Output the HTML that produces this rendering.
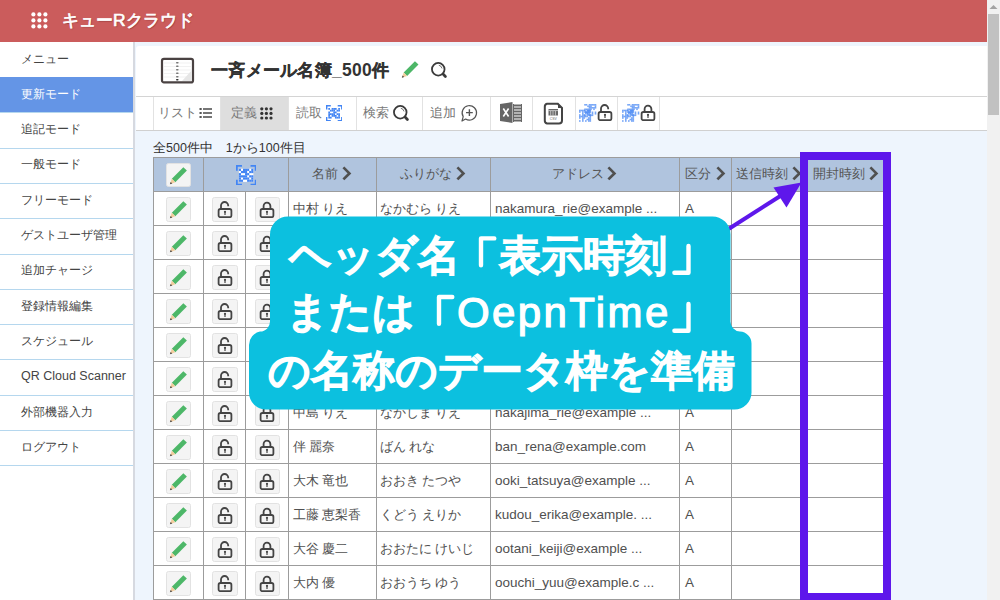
<!DOCTYPE html>
<html><head><meta charset="utf-8">
<style>
*{box-sizing:border-box;margin:0;padding:0}
html,body{width:1000px;height:600px;overflow:hidden;background:#eef5fd;font-family:"Liberation Sans",sans-serif;color:#333}
.a{position:absolute}
.nw{white-space:nowrap}
.si{position:absolute;left:0;width:133px;font-size:11.8px;padding-left:21px;color:#444;white-space:nowrap}
.sl{position:absolute;left:0;width:133px;height:1px;background:#b5d7ee}
.tt{position:absolute;font-size:12.5px;color:#777;white-space:nowrap}
.vl{position:absolute;width:1px;background:#9c9c9c}
.hl{position:absolute;height:1px;background:#9c9c9c}
.ct{position:absolute;font-size:12.5px;color:#505050;white-space:nowrap}
.btn{position:absolute;width:25px;height:25px;background:#f4f4f4;border:1px solid #e2e2e2;border-radius:2.5px}
.th{position:absolute;font-size:12.7px;color:#555;white-space:nowrap}
.co{position:absolute;color:#fff;font-weight:normal;white-space:nowrap;font-size:42px;-webkit-text-stroke:2.2px #fff}
</style></head><body>

<div class="a" style="left:0;top:0;width:987px;height:42px;background:#cb5c5c"></div>
<svg class="a" style="left:31px;top:12px" width="17" height="17" fill="#fff"><circle cx="2.4" cy="2.4" r="2.1"/><circle cx="2.4" cy="8.4" r="2.1"/><circle cx="2.4" cy="14.4" r="2.1"/><circle cx="8.4" cy="2.4" r="2.1"/><circle cx="8.4" cy="8.4" r="2.1"/><circle cx="8.4" cy="14.4" r="2.1"/><circle cx="14.4" cy="2.4" r="2.1"/><circle cx="14.4" cy="8.4" r="2.1"/><circle cx="14.4" cy="14.4" r="2.1"/></svg>
<div id="logo" class="a nw" style="left:62px;top:8px;font-size:17.4px;color:#fff;-webkit-text-stroke:0.7px #fff;text-shadow:1px 1px 1px rgba(60,0,0,0.35)">キューRクラウド</div>
<div class="a" style="left:987px;top:0;width:13px;height:600px;background:#f1f1f1"></div>
<div class="a" style="left:988px;top:14px;width:11px;height:101px;background:#c1c1c1"></div>
<svg class="a" style="left:989px;top:4px" width="9" height="6"><path d="M0.5 5 L4.5 1 L8.5 5Z" fill="#a3a3a3"/></svg>
<div class="a" style="left:0;top:42px;width:133px;height:558px;background:#fff"></div>
<div class="a" style="left:133px;top:42px;width:1.5px;height:558px;background:#d6d9e0"></div>
<div class="si" style="top:50.5px;color:#444;line-height:16px;">メニュー</div>
<div class="sl" style="top:77.0px"></div>
<div class="a" style="left:0;top:77px;width:133px;height:35.3px;background:#6495e6"></div>
<div class="si" style="top:85.8px;color:#fff;line-height:16px;">更新モード</div>
<div class="sl" style="top:112.3px"></div>
<div class="si" style="top:121.1px;color:#444;line-height:16px;">追記モード</div>
<div class="sl" style="top:147.6px"></div>
<div class="si" style="top:156.4px;color:#444;line-height:16px;">一般モード</div>
<div class="sl" style="top:182.9px"></div>
<div class="si" style="top:191.7px;color:#444;line-height:16px;">フリーモード</div>
<div class="sl" style="top:218.2px"></div>
<div class="si" style="top:227.0px;color:#444;line-height:16px;">ゲストユーザ管理</div>
<div class="sl" style="top:253.5px"></div>
<div class="si" style="top:262.3px;color:#444;line-height:16px;">追加チャージ</div>
<div class="sl" style="top:288.8px"></div>
<div class="si" style="top:297.6px;color:#444;line-height:16px;">登録情報編集</div>
<div class="sl" style="top:324.1px"></div>
<div class="si" style="top:332.9px;color:#444;line-height:16px;">スケジュール</div>
<div class="sl" style="top:359.4px"></div>
<div class="si" style="top:368.2px;color:#444;line-height:16px;font-size:12.5px;">QR Cloud Scanner</div>
<div class="sl" style="top:394.7px"></div>
<div class="si" style="top:403.5px;color:#444;line-height:16px;">外部機器入力</div>
<div class="sl" style="top:430.0px"></div>
<div class="si" style="top:438.8px;color:#444;line-height:16px;">ログアウト</div>
<div class="sl" style="top:465.3px"></div>
<div class="a" style="left:136px;top:46px;width:851px;height:84px;background:#fff;border-radius:3px 0 0 0"></div>
<svg class="a" style="left:160px;top:57px" width="36" height="28" viewBox="0 0 36 28">
<rect x="2" y="1.8" width="31" height="23.6" rx="2" fill="#fff" stroke="#4a4242" stroke-width="2.2"/>
<g stroke="#eee" stroke-width="0.8"><line x1="4" y1="6" x2="32" y2="6"/><line x1="4" y1="9.5" x2="32" y2="9.5"/><line x1="4" y1="13" x2="32" y2="13"/><line x1="4" y1="16.5" x2="32" y2="16.5"/><line x1="4" y1="20" x2="32" y2="20"/></g>
<path d="M32 13 L32 24 L22 24Z" fill="#e6e6e6"/>
<g fill="#777"><rect x="16" y="5" width="2.6" height="1.4" rx="0.7"/><rect x="16" y="8.5" width="2.6" height="1.4" rx="0.7"/><rect x="16" y="12" width="2.6" height="1.4" rx="0.7"/><rect x="16" y="15.5" width="2.6" height="1.4" rx="0.7"/><rect x="16" y="19" width="2.6" height="1.4" rx="0.7"/><rect x="16" y="22" width="2.6" height="1.6" rx="0.8" fill="#333"/></g>
</svg>
<div id="ttl" class="a nw" style="left:211px;top:60px;font-size:17.45px;letter-spacing:0.3px;font-weight:bold;color:#333;line-height:20px;-webkit-text-stroke:0.3px #333">一斉メール名簿<span style="-webkit-text-stroke:0">_500</span>件</div>
<svg class="a" style="left:398px;top:57.3px" width="24.5" height="24.5" viewBox="0 0 25 25">
<path d="M17.3 4.3 L20.9 7.6 L9.3 19.3 L5.8 15.8Z" fill="#4db768"/>
<path d="M5.8 15.8 L9.3 19.3 L3.9 21.3Z" fill="#f3cc9c"/>
<path d="M4.7 18.9 L6.3 20.5 L3.9 21.3Z" fill="#444"/>
</svg>
<svg class="a" style="left:430.8px;top:62.4px" width="18" height="18" viewBox="0 0 18 18">
<circle cx="7.25" cy="7.25" r="6.3" fill="none" stroke="#3a3a3a" stroke-width="1.8"/>
<path d="M7.8 3.2 A4.2 4.2 0 0 1 11.0 6.4" fill="none" stroke="#3a3a3a" stroke-width="0.9" stroke-opacity="0.8"/>
<path d="M12.3 12.3 L14.4 14.4" stroke="#3a3a3a" stroke-width="2.8" stroke-linecap="round"/>
</svg>
<div class="a" style="left:136px;top:96px;width:851px;height:1px;background:#d4d4d4"></div>
<div class="a" style="left:136px;top:129.5px;width:851px;height:1.5px;background:#d0d0d0"></div>
<div class="a" style="left:220px;top:97px;width:68px;height:32.5px;background:#dedede"></div>
<div class="a" style="left:152.5px;top:97px;width:1px;height:32.5px;background:#e2e2e2"></div>
<div class="a" style="left:220px;top:97px;width:1px;height:32.5px;background:#e2e2e2"></div>
<div class="a" style="left:288px;top:97px;width:1px;height:32.5px;background:#e2e2e2"></div>
<div class="a" style="left:355.5px;top:97px;width:1px;height:32.5px;background:#e2e2e2"></div>
<div class="a" style="left:422px;top:97px;width:1px;height:32.5px;background:#e2e2e2"></div>
<div class="a" style="left:490px;top:97px;width:1px;height:32.5px;background:#e2e2e2"></div>
<div class="a" style="left:532px;top:97px;width:1px;height:32.5px;background:#e2e2e2"></div>
<div class="a" style="left:574.5px;top:97px;width:1px;height:32.5px;background:#e2e2e2"></div>
<div class="a" style="left:616.5px;top:97px;width:1px;height:32.5px;background:#e2e2e2"></div>
<div class="a" style="left:659px;top:97px;width:1px;height:32.5px;background:#e2e2e2"></div>
<div class="tt" style="left:158px;top:106px;line-height:15px">リスト</div>
<div class="tt" style="left:231px;top:106px;line-height:15px">定義</div>
<div class="tt" style="left:296px;top:106px;line-height:15px">読取</div>
<div class="tt" style="left:363px;top:106px;line-height:15px">検索</div>
<div class="tt" style="left:430px;top:106px;line-height:15px">追加</div>
<svg class="a" style="left:199px;top:107px" width="14" height="12" viewBox="0 0 14 12" fill="#555">
<rect x="0.5" y="1" width="2.2" height="2"/><rect x="4" y="1.2" width="9" height="1.6"/>
<rect x="0.5" y="5" width="2.2" height="2"/><rect x="4" y="5.2" width="9" height="1.6"/>
<rect x="0.5" y="9" width="2.2" height="2"/><rect x="4" y="9.2" width="9" height="1.6"/>
</svg>
<svg class="a" style="left:260px;top:106.5px" width="13" height="13" fill="#333"><circle cx="1.8" cy="1.8" r="1.6"/><circle cx="1.8" cy="6.3999999999999995" r="1.6"/><circle cx="1.8" cy="11.0" r="1.6"/><circle cx="6.3999999999999995" cy="1.8" r="1.6"/><circle cx="6.3999999999999995" cy="6.3999999999999995" r="1.6"/><circle cx="6.3999999999999995" cy="11.0" r="1.6"/><circle cx="11.0" cy="1.8" r="1.6"/><circle cx="11.0" cy="6.3999999999999995" r="1.6"/><circle cx="11.0" cy="11.0" r="1.6"/></svg>
<svg class="a" style="left:325.8px;top:104.8px" width="16.5" height="16.5" viewBox="0 0 16.5 16.5">
<g fill="none" stroke="#4285f4" stroke-width="1.4"><path d="M0.7 4.6 V0.7 H4.8"/><path d="M11.7 0.7 H15.8 V4.6"/><path d="M0.7 11.9 V15.8 H4.8"/><path d="M11.7 15.8 H15.8 V11.9"/></g>
<rect x="2.3" y="3" width="11.7" height="10.6" fill="#fff"/><g fill="#4285f4"><rect x="2.30" y="3.00" width="1.7" height="1.8"/><rect x="5.62" y="3.00" width="1.7" height="1.8"/><rect x="7.28" y="3.00" width="1.7" height="1.8"/><rect x="8.94" y="3.00" width="1.7" height="1.8"/><rect x="12.26" y="3.00" width="1.7" height="1.8"/><rect x="3.96" y="4.75" width="1.7" height="1.8"/><rect x="5.62" y="4.75" width="1.7" height="1.8"/><rect x="7.28" y="4.75" width="1.7" height="1.8"/><rect x="10.60" y="4.75" width="1.7" height="1.8"/><rect x="12.26" y="4.75" width="1.7" height="1.8"/><rect x="2.30" y="6.50" width="1.7" height="1.8"/><rect x="7.28" y="6.50" width="1.7" height="1.8"/><rect x="8.94" y="6.50" width="1.7" height="1.8"/><rect x="2.30" y="8.25" width="1.7" height="1.8"/><rect x="3.96" y="8.25" width="1.7" height="1.8"/><rect x="5.62" y="8.25" width="1.7" height="1.8"/><rect x="7.28" y="8.25" width="1.7" height="1.8"/><rect x="10.60" y="8.25" width="1.7" height="1.8"/><rect x="12.26" y="8.25" width="1.7" height="1.8"/><rect x="2.30" y="10.00" width="1.7" height="1.8"/><rect x="5.62" y="10.00" width="1.7" height="1.8"/><rect x="7.28" y="10.00" width="1.7" height="1.8"/><rect x="8.94" y="10.00" width="1.7" height="1.8"/><rect x="12.26" y="10.00" width="1.7" height="1.8"/><rect x="2.30" y="11.75" width="1.7" height="1.8"/><rect x="3.96" y="11.75" width="1.7" height="1.8"/><rect x="8.94" y="11.75" width="1.7" height="1.8"/><rect x="10.60" y="11.75" width="1.7" height="1.8"/><rect x="12.26" y="11.75" width="1.7" height="1.8"/></g>
</svg>
<svg class="a" style="left:393px;top:104.6px" width="18" height="18" viewBox="0 0 18 18">
<circle cx="7.25" cy="7.25" r="6.3" fill="none" stroke="#3a3a3a" stroke-width="1.8"/>
<path d="M7.8 3.2 A4.2 4.2 0 0 1 11.0 6.4" fill="none" stroke="#3a3a3a" stroke-width="0.9" stroke-opacity="0.8"/>
<path d="M12.3 12.3 L14.4 14.4" stroke="#3a3a3a" stroke-width="2.8" stroke-linecap="round"/>
</svg>
<svg class="a" style="left:460px;top:104px" width="18" height="18" viewBox="0 0 18 18">
<path d="M3.2 12.6 A7.2 7.2 0 1 1 5.6 15 L2 17 Z" fill="none" stroke="#555" stroke-width="1.2" stroke-linejoin="round"/>
<path d="M9.4 5.2 V12 M6 8.6 H12.8" stroke="#555" stroke-width="1.4"/>
</svg>
<svg class="a" style="left:499px;top:101px" width="24" height="23" viewBox="0 0 24 23">
<path d="M1 3 L13.5 1 L13.5 22 L1 20Z" fill="#666"/>
<path d="M4.3 7.5 L9.6 15.5 M9.6 7.5 L4.3 15.5" stroke="#fff" stroke-width="1.6"/>
<g fill="#666"><rect x="14.5" y="3.5" width="8" height="2"/><rect x="14.5" y="6.5" width="8" height="2"/><rect x="14.5" y="9.5" width="8" height="2"/><rect x="14.5" y="12.5" width="8" height="2"/><rect x="14.5" y="15.5" width="8" height="2"/><rect x="14.5" y="18.5" width="8" height="2"/></g>
<g fill="#666"><rect x="14" y="3" width="1" height="18"/><rect x="22" y="3" width="1" height="18"/></g>
</svg>
<svg class="a" style="left:543px;top:101.5px" width="21" height="23" viewBox="0 0 21 23">
<path d="M4 1.8 H14.8 L19 6 V18.5 A3 3 0 0 1 16 21.5 H4 A3 3 0 0 1 1.8 18.5 V4.8 A3 3 0 0 1 4 1.8Z" fill="#fff" stroke="#444" stroke-width="2"/>
<path d="M15 1.5 L19.5 6 L15 6Z" fill="#444"/>
<rect x="5.5" y="7" width="9.5" height="6.5" fill="#666"/>
<g stroke="#fff" stroke-width="0.6"><line x1="5.5" y1="8.6" x2="15" y2="8.6"/><line x1="7.7" y1="9" x2="7.7" y2="13.5"/><line x1="10" y1="9" x2="10" y2="13.5"/><line x1="12.4" y1="9" x2="12.4" y2="13.5"/></g>
<text x="10.3" y="18" font-size="3.4" fill="#666" text-anchor="middle" font-family="Liberation Sans">CSV</text>
</svg>
<svg class="a" style="left:579px;top:104px" width="18" height="18" viewBox="0 0 18 18" fill="#4a8af4" fill-opacity="0.75"><rect x="5.20" y="0.00" width="1.6" height="1.6"/><rect x="6.70" y="0.00" width="1.6" height="1.6"/><rect x="9.70" y="0.00" width="1.6" height="1.6"/><rect x="11.20" y="0.00" width="1.6" height="1.6"/><rect x="12.70" y="0.00" width="1.6" height="1.6"/><rect x="14.20" y="0.00" width="1.6" height="1.6"/><rect x="15.70" y="0.00" width="1.6" height="1.6"/><rect x="8.20" y="1.50" width="1.6" height="1.6"/><rect x="9.70" y="1.50" width="1.6" height="1.6"/><rect x="11.20" y="1.50" width="1.6" height="1.6"/><rect x="15.70" y="1.50" width="1.6" height="1.6"/><rect x="9.70" y="3.00" width="1.6" height="1.6"/><rect x="11.20" y="3.00" width="1.6" height="1.6"/><rect x="12.70" y="3.00" width="1.6" height="1.6"/><rect x="14.20" y="3.00" width="1.6" height="1.6"/><rect x="15.70" y="3.00" width="1.6" height="1.6"/><rect x="5.20" y="4.50" width="1.6" height="1.6"/><rect x="6.70" y="4.50" width="1.6" height="1.6"/><rect x="8.20" y="4.50" width="1.6" height="1.6"/><rect x="9.70" y="4.50" width="1.6" height="1.6"/><rect x="11.20" y="4.50" width="1.6" height="1.6"/><rect x="14.20" y="4.50" width="1.6" height="1.6"/><rect x="5.20" y="6.00" width="1.6" height="1.6"/><rect x="8.20" y="6.00" width="1.6" height="1.6"/><rect x="9.70" y="6.00" width="1.6" height="1.6"/><rect x="5.20" y="7.50" width="1.6" height="1.6"/><rect x="6.70" y="7.50" width="1.6" height="1.6"/><rect x="8.20" y="7.50" width="1.6" height="1.6"/><rect x="9.70" y="7.50" width="1.6" height="1.6"/><rect x="12.70" y="7.50" width="1.6" height="1.6"/><rect x="15.70" y="7.50" width="1.6" height="1.6"/><rect x="8.20" y="9.00" width="1.6" height="1.6"/><rect x="9.70" y="9.00" width="1.6" height="1.6"/><rect x="12.70" y="9.00" width="1.6" height="1.6"/><rect x="15.70" y="9.00" width="1.6" height="1.6"/><rect x="5.20" y="10.50" width="1.6" height="1.6"/><rect x="9.70" y="10.50" width="1.6" height="1.6"/><rect x="11.20" y="10.50" width="1.6" height="1.6"/><rect x="12.70" y="10.50" width="1.6" height="1.6"/><rect x="0.00" y="5.70" width="1.6" height="1.6"/><rect x="1.50" y="5.70" width="1.6" height="1.6"/><rect x="3.00" y="5.70" width="1.6" height="1.6"/><rect x="4.50" y="5.70" width="1.6" height="1.6"/><rect x="7.50" y="5.70" width="1.6" height="1.6"/><rect x="9.00" y="5.70" width="1.6" height="1.6"/><rect x="10.50" y="5.70" width="1.6" height="1.6"/><rect x="0.00" y="7.20" width="1.6" height="1.6"/><rect x="3.00" y="7.20" width="1.6" height="1.6"/><rect x="6.00" y="7.20" width="1.6" height="1.6"/><rect x="7.50" y="7.20" width="1.6" height="1.6"/><rect x="9.00" y="7.20" width="1.6" height="1.6"/><rect x="10.50" y="7.20" width="1.6" height="1.6"/><rect x="3.00" y="8.70" width="1.6" height="1.6"/><rect x="6.00" y="8.70" width="1.6" height="1.6"/><rect x="7.50" y="8.70" width="1.6" height="1.6"/><rect x="0.00" y="10.20" width="1.6" height="1.6"/><rect x="3.00" y="10.20" width="1.6" height="1.6"/><rect x="4.50" y="10.20" width="1.6" height="1.6"/><rect x="7.50" y="10.20" width="1.6" height="1.6"/><rect x="9.00" y="10.20" width="1.6" height="1.6"/><rect x="10.50" y="10.20" width="1.6" height="1.6"/><rect x="0.00" y="11.70" width="1.6" height="1.6"/><rect x="1.50" y="11.70" width="1.6" height="1.6"/><rect x="3.00" y="11.70" width="1.6" height="1.6"/><rect x="4.50" y="11.70" width="1.6" height="1.6"/><rect x="6.00" y="11.70" width="1.6" height="1.6"/><rect x="7.50" y="11.70" width="1.6" height="1.6"/><rect x="10.50" y="11.70" width="1.6" height="1.6"/><rect x="0.00" y="13.20" width="1.6" height="1.6"/><rect x="3.00" y="13.20" width="1.6" height="1.6"/><rect x="4.50" y="13.20" width="1.6" height="1.6"/><rect x="9.00" y="13.20" width="1.6" height="1.6"/><rect x="10.50" y="13.20" width="1.6" height="1.6"/><rect x="3.00" y="14.70" width="1.6" height="1.6"/><rect x="7.50" y="14.70" width="1.6" height="1.6"/><rect x="9.00" y="14.70" width="1.6" height="1.6"/><rect x="10.50" y="14.70" width="1.6" height="1.6"/><rect x="0.00" y="16.20" width="1.6" height="1.6"/><rect x="3.00" y="16.20" width="1.6" height="1.6"/><rect x="6.00" y="16.20" width="1.6" height="1.6"/><rect x="9.00" y="16.20" width="1.6" height="1.6"/><rect x="10.50" y="16.20" width="1.6" height="1.6"/></svg>
<svg class="a" style="left:596.5px;top:102.6px" width="16.0" height="18.0" viewBox="0 0 16 18">
<path d="M4 9 V5.6 A3.6 3.6 0 0 1 11.2 5.6 V6.2" fill="none" stroke="#444" stroke-width="1.8"/><rect x="1.6" y="9" width="12.8" height="8.2" rx="1.8" fill="#fff" fill-opacity="0" stroke="#444" stroke-width="1.8"/>
<circle cx="8" cy="11.8" r="1.1" fill="#444"/><rect x="7.4" y="12" width="1.2" height="3" fill="#444"/>
</svg>
<svg class="a" style="left:622px;top:104px" width="18" height="18" viewBox="0 0 18 18" fill="#4a8af4" fill-opacity="0.75"><rect x="5.20" y="0.00" width="1.6" height="1.6"/><rect x="6.70" y="0.00" width="1.6" height="1.6"/><rect x="9.70" y="0.00" width="1.6" height="1.6"/><rect x="11.20" y="0.00" width="1.6" height="1.6"/><rect x="12.70" y="0.00" width="1.6" height="1.6"/><rect x="14.20" y="0.00" width="1.6" height="1.6"/><rect x="15.70" y="0.00" width="1.6" height="1.6"/><rect x="8.20" y="1.50" width="1.6" height="1.6"/><rect x="9.70" y="1.50" width="1.6" height="1.6"/><rect x="11.20" y="1.50" width="1.6" height="1.6"/><rect x="15.70" y="1.50" width="1.6" height="1.6"/><rect x="9.70" y="3.00" width="1.6" height="1.6"/><rect x="11.20" y="3.00" width="1.6" height="1.6"/><rect x="12.70" y="3.00" width="1.6" height="1.6"/><rect x="14.20" y="3.00" width="1.6" height="1.6"/><rect x="15.70" y="3.00" width="1.6" height="1.6"/><rect x="5.20" y="4.50" width="1.6" height="1.6"/><rect x="6.70" y="4.50" width="1.6" height="1.6"/><rect x="8.20" y="4.50" width="1.6" height="1.6"/><rect x="9.70" y="4.50" width="1.6" height="1.6"/><rect x="11.20" y="4.50" width="1.6" height="1.6"/><rect x="14.20" y="4.50" width="1.6" height="1.6"/><rect x="5.20" y="6.00" width="1.6" height="1.6"/><rect x="8.20" y="6.00" width="1.6" height="1.6"/><rect x="9.70" y="6.00" width="1.6" height="1.6"/><rect x="5.20" y="7.50" width="1.6" height="1.6"/><rect x="6.70" y="7.50" width="1.6" height="1.6"/><rect x="8.20" y="7.50" width="1.6" height="1.6"/><rect x="9.70" y="7.50" width="1.6" height="1.6"/><rect x="12.70" y="7.50" width="1.6" height="1.6"/><rect x="15.70" y="7.50" width="1.6" height="1.6"/><rect x="8.20" y="9.00" width="1.6" height="1.6"/><rect x="9.70" y="9.00" width="1.6" height="1.6"/><rect x="12.70" y="9.00" width="1.6" height="1.6"/><rect x="15.70" y="9.00" width="1.6" height="1.6"/><rect x="5.20" y="10.50" width="1.6" height="1.6"/><rect x="9.70" y="10.50" width="1.6" height="1.6"/><rect x="11.20" y="10.50" width="1.6" height="1.6"/><rect x="12.70" y="10.50" width="1.6" height="1.6"/><rect x="0.00" y="5.70" width="1.6" height="1.6"/><rect x="1.50" y="5.70" width="1.6" height="1.6"/><rect x="3.00" y="5.70" width="1.6" height="1.6"/><rect x="4.50" y="5.70" width="1.6" height="1.6"/><rect x="7.50" y="5.70" width="1.6" height="1.6"/><rect x="9.00" y="5.70" width="1.6" height="1.6"/><rect x="10.50" y="5.70" width="1.6" height="1.6"/><rect x="0.00" y="7.20" width="1.6" height="1.6"/><rect x="3.00" y="7.20" width="1.6" height="1.6"/><rect x="6.00" y="7.20" width="1.6" height="1.6"/><rect x="7.50" y="7.20" width="1.6" height="1.6"/><rect x="9.00" y="7.20" width="1.6" height="1.6"/><rect x="10.50" y="7.20" width="1.6" height="1.6"/><rect x="3.00" y="8.70" width="1.6" height="1.6"/><rect x="6.00" y="8.70" width="1.6" height="1.6"/><rect x="7.50" y="8.70" width="1.6" height="1.6"/><rect x="0.00" y="10.20" width="1.6" height="1.6"/><rect x="3.00" y="10.20" width="1.6" height="1.6"/><rect x="4.50" y="10.20" width="1.6" height="1.6"/><rect x="7.50" y="10.20" width="1.6" height="1.6"/><rect x="9.00" y="10.20" width="1.6" height="1.6"/><rect x="10.50" y="10.20" width="1.6" height="1.6"/><rect x="0.00" y="11.70" width="1.6" height="1.6"/><rect x="1.50" y="11.70" width="1.6" height="1.6"/><rect x="3.00" y="11.70" width="1.6" height="1.6"/><rect x="4.50" y="11.70" width="1.6" height="1.6"/><rect x="6.00" y="11.70" width="1.6" height="1.6"/><rect x="7.50" y="11.70" width="1.6" height="1.6"/><rect x="10.50" y="11.70" width="1.6" height="1.6"/><rect x="0.00" y="13.20" width="1.6" height="1.6"/><rect x="3.00" y="13.20" width="1.6" height="1.6"/><rect x="4.50" y="13.20" width="1.6" height="1.6"/><rect x="9.00" y="13.20" width="1.6" height="1.6"/><rect x="10.50" y="13.20" width="1.6" height="1.6"/><rect x="3.00" y="14.70" width="1.6" height="1.6"/><rect x="7.50" y="14.70" width="1.6" height="1.6"/><rect x="9.00" y="14.70" width="1.6" height="1.6"/><rect x="10.50" y="14.70" width="1.6" height="1.6"/><rect x="0.00" y="16.20" width="1.6" height="1.6"/><rect x="3.00" y="16.20" width="1.6" height="1.6"/><rect x="6.00" y="16.20" width="1.6" height="1.6"/><rect x="9.00" y="16.20" width="1.6" height="1.6"/><rect x="10.50" y="16.20" width="1.6" height="1.6"/></svg>
<svg class="a" style="left:639.5px;top:102.6px" width="16.0" height="18.0" viewBox="0 0 16 18">
<path d="M4.6 9 V6 A3.4 3.4 0 0 1 11.4 6 V9" fill="none" stroke="#444" stroke-width="1.8"/><rect x="1.6" y="9" width="12.8" height="8.2" rx="1.8" fill="#fff" fill-opacity="0" stroke="#444" stroke-width="1.8"/>
<circle cx="8" cy="11.8" r="1.1" fill="#444"/><rect x="7.4" y="12" width="1.2" height="3" fill="#444"/>
</svg>
<div id="cnt" class="a nw" style="left:153px;top:141px;font-size:12.5px;color:#333;line-height:15px">全500件中　1から100件目</div>
<div class="a" style="left:153px;top:157.5px;width:731px;height:34px;background:#b0c4de"></div>
<div class="a" style="left:153px;top:191.5px;width:731px;height:408.5px;background:#fff"></div>
<div class="vl" style="left:152.5px;top:157.5px;height:442.5px"></div>
<div class="vl" style="left:203.0px;top:157.5px;height:442.5px"></div>
<div class="vl" style="left:245.1px;top:191.5px;height:408.5px"></div>
<div class="vl" style="left:288.0px;top:157.5px;height:442.5px"></div>
<div class="vl" style="left:376.2px;top:157.5px;height:442.5px"></div>
<div class="vl" style="left:489.5px;top:157.5px;height:442.5px"></div>
<div class="vl" style="left:678.9px;top:157.5px;height:442.5px"></div>
<div class="vl" style="left:730.8px;top:157.5px;height:442.5px"></div>
<div class="vl" style="left:804.5px;top:157.5px;height:442.5px"></div>
<div class="vl" style="left:883.5px;top:157.5px;height:442.5px"></div>
<div class="hl" style="left:153px;top:157.0px;width:731px"></div>
<div class="hl" style="left:153px;top:191.0px;width:731px"></div>
<div class="hl" style="left:153px;top:225.0px;width:731px"></div>
<div class="hl" style="left:153px;top:259.0px;width:731px"></div>
<div class="hl" style="left:153px;top:293.0px;width:731px"></div>
<div class="hl" style="left:153px;top:327.0px;width:731px"></div>
<div class="hl" style="left:153px;top:361.0px;width:731px"></div>
<div class="hl" style="left:153px;top:395.0px;width:731px"></div>
<div class="hl" style="left:153px;top:429.0px;width:731px"></div>
<div class="hl" style="left:153px;top:463.0px;width:731px"></div>
<div class="hl" style="left:153px;top:497.0px;width:731px"></div>
<div class="hl" style="left:153px;top:531.0px;width:731px"></div>
<div class="hl" style="left:153px;top:565.0px;width:731px"></div>
<div class="hl" style="left:153px;top:599.0px;width:731px"></div>
<div class="btn" style="left:166px;top:162.5px;width:24.5px;height:24.5px"></div>
<svg class="a" style="left:166px;top:162.5px" width="25.0" height="25.0" viewBox="0 0 25 25">
<path d="M17.3 4.3 L20.9 7.6 L9.3 19.3 L5.8 15.8Z" fill="#4db768"/>
<path d="M5.8 15.8 L9.3 19.3 L3.9 21.3Z" fill="#f3cc9c"/>
<path d="M4.7 18.9 L6.3 20.5 L3.9 21.3Z" fill="#444"/>
</svg>
<svg class="a" style="left:235.5px;top:164.75px" width="20.5" height="20.5" viewBox="0 0 16.5 16.5">
<g fill="none" stroke="#4285f4" stroke-width="1.4"><path d="M0.7 4.6 V0.7 H4.8"/><path d="M11.7 0.7 H15.8 V4.6"/><path d="M0.7 11.9 V15.8 H4.8"/><path d="M11.7 15.8 H15.8 V11.9"/></g>
<rect x="2.3" y="3" width="11.7" height="10.6" fill="#fff"/><g fill="#4285f4"><rect x="2.30" y="3.00" width="1.7" height="1.8"/><rect x="5.62" y="3.00" width="1.7" height="1.8"/><rect x="7.28" y="3.00" width="1.7" height="1.8"/><rect x="8.94" y="3.00" width="1.7" height="1.8"/><rect x="12.26" y="3.00" width="1.7" height="1.8"/><rect x="3.96" y="4.75" width="1.7" height="1.8"/><rect x="5.62" y="4.75" width="1.7" height="1.8"/><rect x="7.28" y="4.75" width="1.7" height="1.8"/><rect x="10.60" y="4.75" width="1.7" height="1.8"/><rect x="12.26" y="4.75" width="1.7" height="1.8"/><rect x="2.30" y="6.50" width="1.7" height="1.8"/><rect x="7.28" y="6.50" width="1.7" height="1.8"/><rect x="8.94" y="6.50" width="1.7" height="1.8"/><rect x="2.30" y="8.25" width="1.7" height="1.8"/><rect x="3.96" y="8.25" width="1.7" height="1.8"/><rect x="5.62" y="8.25" width="1.7" height="1.8"/><rect x="7.28" y="8.25" width="1.7" height="1.8"/><rect x="10.60" y="8.25" width="1.7" height="1.8"/><rect x="12.26" y="8.25" width="1.7" height="1.8"/><rect x="2.30" y="10.00" width="1.7" height="1.8"/><rect x="5.62" y="10.00" width="1.7" height="1.8"/><rect x="7.28" y="10.00" width="1.7" height="1.8"/><rect x="8.94" y="10.00" width="1.7" height="1.8"/><rect x="12.26" y="10.00" width="1.7" height="1.8"/><rect x="2.30" y="11.75" width="1.7" height="1.8"/><rect x="3.96" y="11.75" width="1.7" height="1.8"/><rect x="8.94" y="11.75" width="1.7" height="1.8"/><rect x="10.60" y="11.75" width="1.7" height="1.8"/><rect x="12.26" y="11.75" width="1.7" height="1.8"/></g>
</svg>
<div class="th" style="left:311.5px;top:166px;line-height:16px">名前</div>
<svg class="a" style="left:342.0px;top:166px" width="11" height="15" viewBox="0 0 11 15"><path d="M1.4 1.4 L7.4 7.4 L1.4 13.4" fill="none" stroke="#505050" stroke-width="2.7"/></svg>
<div class="th" style="left:399.5px;top:166px;line-height:16px">ふりがな</div>
<svg class="a" style="left:455.5px;top:166px" width="11" height="15" viewBox="0 0 11 15"><path d="M1.4 1.4 L7.4 7.4 L1.4 13.4" fill="none" stroke="#505050" stroke-width="2.7"/></svg>
<div class="th" style="left:551.5px;top:166px;line-height:16px">アドレス</div>
<svg class="a" style="left:607.0px;top:166px" width="11" height="15" viewBox="0 0 11 15"><path d="M1.4 1.4 L7.4 7.4 L1.4 13.4" fill="none" stroke="#505050" stroke-width="2.7"/></svg>
<div class="th" style="left:685px;top:166px;line-height:16px">区分</div>
<svg class="a" style="left:715.5px;top:166px" width="11" height="15" viewBox="0 0 11 15"><path d="M1.4 1.4 L7.4 7.4 L1.4 13.4" fill="none" stroke="#505050" stroke-width="2.7"/></svg>
<div class="th" style="left:736px;top:166px;line-height:16px">送信時刻</div>
<svg class="a" style="left:791.5px;top:166px" width="11" height="15" viewBox="0 0 11 15"><path d="M1.4 1.4 L7.4 7.4 L1.4 13.4" fill="none" stroke="#505050" stroke-width="2.7"/></svg>
<div class="th" style="left:812.5px;top:166px;line-height:16px">開封時刻</div>
<svg class="a" style="left:868.5px;top:166px" width="11" height="15" viewBox="0 0 11 15"><path d="M1.4 1.4 L7.4 7.4 L1.4 13.4" fill="none" stroke="#505050" stroke-width="2.7"/></svg>
<div class="btn" style="left:166.2px;top:196.5px;width:24.6px;height:25.2px"></div>
<svg class="a" style="left:166.2px;top:196.5px" width="25.0" height="25.0" viewBox="0 0 25 25">
<path d="M17.3 4.3 L20.9 7.6 L9.3 19.3 L5.8 15.8Z" fill="#4db768"/>
<path d="M5.8 15.8 L9.3 19.3 L3.9 21.3Z" fill="#f3cc9c"/>
<path d="M4.7 18.9 L6.3 20.5 L3.9 21.3Z" fill="#444"/>
</svg>
<div class="btn" style="left:212.3px;top:196.5px;width:25.5px;height:25.2px"></div>
<svg class="a" style="left:217.3px;top:199.5px" width="16.0" height="18.0" viewBox="0 0 16 18">
<path d="M4 9 V5.6 A3.6 3.6 0 0 1 11.2 5.6 V6.2" fill="none" stroke="#444" stroke-width="1.8"/><rect x="1.6" y="9" width="12.8" height="8.2" rx="1.8" fill="#fff" fill-opacity="0" stroke="#444" stroke-width="1.8"/>
<circle cx="8" cy="11.8" r="1.1" fill="#444"/><rect x="7.4" y="12" width="1.2" height="3" fill="#444"/>
</svg>
<div class="btn" style="left:255.2px;top:196.5px;width:24.5px;height:25.2px"></div>
<svg class="a" style="left:259.3px;top:199.5px" width="16.0" height="18.0" viewBox="0 0 16 18">
<path d="M4.6 9 V6 A3.4 3.4 0 0 1 11.4 6 V9" fill="none" stroke="#444" stroke-width="1.8"/><rect x="1.6" y="9" width="12.8" height="8.2" rx="1.8" fill="#fff" fill-opacity="0" stroke="#444" stroke-width="1.8"/>
<circle cx="8" cy="11.8" r="1.1" fill="#444"/><rect x="7.4" y="12" width="1.2" height="3" fill="#444"/>
</svg>
<div class="ct" style="left:293px;top:200.5px;line-height:16px">中村 りえ</div>
<div class="ct" style="left:380px;top:200.5px;line-height:16px">なかむら りえ</div>
<div class="ct" style="left:495px;top:200.5px;line-height:16px;font-size:13.5px">nakamura_rie@example ...</div>
<div class="ct" style="left:685px;top:200.5px;line-height:16px;font-size:13.5px">A</div>
<div class="btn" style="left:166.2px;top:230.5px;width:24.6px;height:25.2px"></div>
<svg class="a" style="left:166.2px;top:230.5px" width="25.0" height="25.0" viewBox="0 0 25 25">
<path d="M17.3 4.3 L20.9 7.6 L9.3 19.3 L5.8 15.8Z" fill="#4db768"/>
<path d="M5.8 15.8 L9.3 19.3 L3.9 21.3Z" fill="#f3cc9c"/>
<path d="M4.7 18.9 L6.3 20.5 L3.9 21.3Z" fill="#444"/>
</svg>
<div class="btn" style="left:212.3px;top:230.5px;width:25.5px;height:25.2px"></div>
<svg class="a" style="left:217.3px;top:233.5px" width="16.0" height="18.0" viewBox="0 0 16 18">
<path d="M4 9 V5.6 A3.6 3.6 0 0 1 11.2 5.6 V6.2" fill="none" stroke="#444" stroke-width="1.8"/><rect x="1.6" y="9" width="12.8" height="8.2" rx="1.8" fill="#fff" fill-opacity="0" stroke="#444" stroke-width="1.8"/>
<circle cx="8" cy="11.8" r="1.1" fill="#444"/><rect x="7.4" y="12" width="1.2" height="3" fill="#444"/>
</svg>
<div class="btn" style="left:255.2px;top:230.5px;width:24.5px;height:25.2px"></div>
<svg class="a" style="left:259.3px;top:233.5px" width="16.0" height="18.0" viewBox="0 0 16 18">
<path d="M4.6 9 V6 A3.4 3.4 0 0 1 11.4 6 V9" fill="none" stroke="#444" stroke-width="1.8"/><rect x="1.6" y="9" width="12.8" height="8.2" rx="1.8" fill="#fff" fill-opacity="0" stroke="#444" stroke-width="1.8"/>
<circle cx="8" cy="11.8" r="1.1" fill="#444"/><rect x="7.4" y="12" width="1.2" height="3" fill="#444"/>
</svg>
<div class="ct" style="left:293px;top:234.5px;line-height:16px">小林 健太</div>
<div class="ct" style="left:380px;top:234.5px;line-height:16px">こばやし けんた</div>
<div class="ct" style="left:495px;top:234.5px;line-height:16px;font-size:13.5px">kobayashi_kenta@example ...</div>
<div class="ct" style="left:685px;top:234.5px;line-height:16px;font-size:13.5px">A</div>
<div class="btn" style="left:166.2px;top:264.5px;width:24.6px;height:25.2px"></div>
<svg class="a" style="left:166.2px;top:264.5px" width="25.0" height="25.0" viewBox="0 0 25 25">
<path d="M17.3 4.3 L20.9 7.6 L9.3 19.3 L5.8 15.8Z" fill="#4db768"/>
<path d="M5.8 15.8 L9.3 19.3 L3.9 21.3Z" fill="#f3cc9c"/>
<path d="M4.7 18.9 L6.3 20.5 L3.9 21.3Z" fill="#444"/>
</svg>
<div class="btn" style="left:212.3px;top:264.5px;width:25.5px;height:25.2px"></div>
<svg class="a" style="left:217.3px;top:267.5px" width="16.0" height="18.0" viewBox="0 0 16 18">
<path d="M4 9 V5.6 A3.6 3.6 0 0 1 11.2 5.6 V6.2" fill="none" stroke="#444" stroke-width="1.8"/><rect x="1.6" y="9" width="12.8" height="8.2" rx="1.8" fill="#fff" fill-opacity="0" stroke="#444" stroke-width="1.8"/>
<circle cx="8" cy="11.8" r="1.1" fill="#444"/><rect x="7.4" y="12" width="1.2" height="3" fill="#444"/>
</svg>
<div class="btn" style="left:255.2px;top:264.5px;width:24.5px;height:25.2px"></div>
<svg class="a" style="left:259.3px;top:267.5px" width="16.0" height="18.0" viewBox="0 0 16 18">
<path d="M4.6 9 V6 A3.4 3.4 0 0 1 11.4 6 V9" fill="none" stroke="#444" stroke-width="1.8"/><rect x="1.6" y="9" width="12.8" height="8.2" rx="1.8" fill="#fff" fill-opacity="0" stroke="#444" stroke-width="1.8"/>
<circle cx="8" cy="11.8" r="1.1" fill="#444"/><rect x="7.4" y="12" width="1.2" height="3" fill="#444"/>
</svg>
<div class="ct" style="left:293px;top:268.5px;line-height:16px">佐藤 花子</div>
<div class="ct" style="left:380px;top:268.5px;line-height:16px">さとう はなこ</div>
<div class="ct" style="left:495px;top:268.5px;line-height:16px;font-size:13.5px">sato_hanako@example ...</div>
<div class="ct" style="left:685px;top:268.5px;line-height:16px;font-size:13.5px">A</div>
<div class="btn" style="left:166.2px;top:298.5px;width:24.6px;height:25.2px"></div>
<svg class="a" style="left:166.2px;top:298.5px" width="25.0" height="25.0" viewBox="0 0 25 25">
<path d="M17.3 4.3 L20.9 7.6 L9.3 19.3 L5.8 15.8Z" fill="#4db768"/>
<path d="M5.8 15.8 L9.3 19.3 L3.9 21.3Z" fill="#f3cc9c"/>
<path d="M4.7 18.9 L6.3 20.5 L3.9 21.3Z" fill="#444"/>
</svg>
<div class="btn" style="left:212.3px;top:298.5px;width:25.5px;height:25.2px"></div>
<svg class="a" style="left:217.3px;top:301.5px" width="16.0" height="18.0" viewBox="0 0 16 18">
<path d="M4 9 V5.6 A3.6 3.6 0 0 1 11.2 5.6 V6.2" fill="none" stroke="#444" stroke-width="1.8"/><rect x="1.6" y="9" width="12.8" height="8.2" rx="1.8" fill="#fff" fill-opacity="0" stroke="#444" stroke-width="1.8"/>
<circle cx="8" cy="11.8" r="1.1" fill="#444"/><rect x="7.4" y="12" width="1.2" height="3" fill="#444"/>
</svg>
<div class="btn" style="left:255.2px;top:298.5px;width:24.5px;height:25.2px"></div>
<svg class="a" style="left:259.3px;top:301.5px" width="16.0" height="18.0" viewBox="0 0 16 18">
<path d="M4.6 9 V6 A3.4 3.4 0 0 1 11.4 6 V9" fill="none" stroke="#444" stroke-width="1.8"/><rect x="1.6" y="9" width="12.8" height="8.2" rx="1.8" fill="#fff" fill-opacity="0" stroke="#444" stroke-width="1.8"/>
<circle cx="8" cy="11.8" r="1.1" fill="#444"/><rect x="7.4" y="12" width="1.2" height="3" fill="#444"/>
</svg>
<div class="ct" style="left:293px;top:302.5px;line-height:16px">鈴木 一郎</div>
<div class="ct" style="left:380px;top:302.5px;line-height:16px">すずき いちろう</div>
<div class="ct" style="left:495px;top:302.5px;line-height:16px;font-size:13.5px">suzuki_ichiro@example ...</div>
<div class="ct" style="left:685px;top:302.5px;line-height:16px;font-size:13.5px">A</div>
<div class="btn" style="left:166.2px;top:332.5px;width:24.6px;height:25.2px"></div>
<svg class="a" style="left:166.2px;top:332.5px" width="25.0" height="25.0" viewBox="0 0 25 25">
<path d="M17.3 4.3 L20.9 7.6 L9.3 19.3 L5.8 15.8Z" fill="#4db768"/>
<path d="M5.8 15.8 L9.3 19.3 L3.9 21.3Z" fill="#f3cc9c"/>
<path d="M4.7 18.9 L6.3 20.5 L3.9 21.3Z" fill="#444"/>
</svg>
<div class="btn" style="left:212.3px;top:332.5px;width:25.5px;height:25.2px"></div>
<svg class="a" style="left:217.3px;top:335.5px" width="16.0" height="18.0" viewBox="0 0 16 18">
<path d="M4 9 V5.6 A3.6 3.6 0 0 1 11.2 5.6 V6.2" fill="none" stroke="#444" stroke-width="1.8"/><rect x="1.6" y="9" width="12.8" height="8.2" rx="1.8" fill="#fff" fill-opacity="0" stroke="#444" stroke-width="1.8"/>
<circle cx="8" cy="11.8" r="1.1" fill="#444"/><rect x="7.4" y="12" width="1.2" height="3" fill="#444"/>
</svg>
<div class="btn" style="left:255.2px;top:332.5px;width:24.5px;height:25.2px"></div>
<svg class="a" style="left:259.3px;top:335.5px" width="16.0" height="18.0" viewBox="0 0 16 18">
<path d="M4.6 9 V6 A3.4 3.4 0 0 1 11.4 6 V9" fill="none" stroke="#444" stroke-width="1.8"/><rect x="1.6" y="9" width="12.8" height="8.2" rx="1.8" fill="#fff" fill-opacity="0" stroke="#444" stroke-width="1.8"/>
<circle cx="8" cy="11.8" r="1.1" fill="#444"/><rect x="7.4" y="12" width="1.2" height="3" fill="#444"/>
</svg>
<div class="ct" style="left:293px;top:336.5px;line-height:16px">田中 美咲</div>
<div class="ct" style="left:380px;top:336.5px;line-height:16px">たなか みさき</div>
<div class="ct" style="left:495px;top:336.5px;line-height:16px;font-size:13.5px">tanaka_misaki@example ...</div>
<div class="ct" style="left:685px;top:336.5px;line-height:16px;font-size:13.5px">A</div>
<div class="btn" style="left:166.2px;top:366.5px;width:24.6px;height:25.2px"></div>
<svg class="a" style="left:166.2px;top:366.5px" width="25.0" height="25.0" viewBox="0 0 25 25">
<path d="M17.3 4.3 L20.9 7.6 L9.3 19.3 L5.8 15.8Z" fill="#4db768"/>
<path d="M5.8 15.8 L9.3 19.3 L3.9 21.3Z" fill="#f3cc9c"/>
<path d="M4.7 18.9 L6.3 20.5 L3.9 21.3Z" fill="#444"/>
</svg>
<div class="btn" style="left:212.3px;top:366.5px;width:25.5px;height:25.2px"></div>
<svg class="a" style="left:217.3px;top:369.5px" width="16.0" height="18.0" viewBox="0 0 16 18">
<path d="M4 9 V5.6 A3.6 3.6 0 0 1 11.2 5.6 V6.2" fill="none" stroke="#444" stroke-width="1.8"/><rect x="1.6" y="9" width="12.8" height="8.2" rx="1.8" fill="#fff" fill-opacity="0" stroke="#444" stroke-width="1.8"/>
<circle cx="8" cy="11.8" r="1.1" fill="#444"/><rect x="7.4" y="12" width="1.2" height="3" fill="#444"/>
</svg>
<div class="btn" style="left:255.2px;top:366.5px;width:24.5px;height:25.2px"></div>
<svg class="a" style="left:259.3px;top:369.5px" width="16.0" height="18.0" viewBox="0 0 16 18">
<path d="M4.6 9 V6 A3.4 3.4 0 0 1 11.4 6 V9" fill="none" stroke="#444" stroke-width="1.8"/><rect x="1.6" y="9" width="12.8" height="8.2" rx="1.8" fill="#fff" fill-opacity="0" stroke="#444" stroke-width="1.8"/>
<circle cx="8" cy="11.8" r="1.1" fill="#444"/><rect x="7.4" y="12" width="1.2" height="3" fill="#444"/>
</svg>
<div class="ct" style="left:293px;top:370.5px;line-height:16px">山本 翔</div>
<div class="ct" style="left:380px;top:370.5px;line-height:16px">やまもと しょう</div>
<div class="ct" style="left:495px;top:370.5px;line-height:16px;font-size:13.5px">yamamoto_sho@example ...</div>
<div class="ct" style="left:685px;top:370.5px;line-height:16px;font-size:13.5px">A</div>
<div class="btn" style="left:166.2px;top:400.5px;width:24.6px;height:25.2px"></div>
<svg class="a" style="left:166.2px;top:400.5px" width="25.0" height="25.0" viewBox="0 0 25 25">
<path d="M17.3 4.3 L20.9 7.6 L9.3 19.3 L5.8 15.8Z" fill="#4db768"/>
<path d="M5.8 15.8 L9.3 19.3 L3.9 21.3Z" fill="#f3cc9c"/>
<path d="M4.7 18.9 L6.3 20.5 L3.9 21.3Z" fill="#444"/>
</svg>
<div class="btn" style="left:212.3px;top:400.5px;width:25.5px;height:25.2px"></div>
<svg class="a" style="left:217.3px;top:403.5px" width="16.0" height="18.0" viewBox="0 0 16 18">
<path d="M4 9 V5.6 A3.6 3.6 0 0 1 11.2 5.6 V6.2" fill="none" stroke="#444" stroke-width="1.8"/><rect x="1.6" y="9" width="12.8" height="8.2" rx="1.8" fill="#fff" fill-opacity="0" stroke="#444" stroke-width="1.8"/>
<circle cx="8" cy="11.8" r="1.1" fill="#444"/><rect x="7.4" y="12" width="1.2" height="3" fill="#444"/>
</svg>
<div class="btn" style="left:255.2px;top:400.5px;width:24.5px;height:25.2px"></div>
<svg class="a" style="left:259.3px;top:403.5px" width="16.0" height="18.0" viewBox="0 0 16 18">
<path d="M4.6 9 V6 A3.4 3.4 0 0 1 11.4 6 V9" fill="none" stroke="#444" stroke-width="1.8"/><rect x="1.6" y="9" width="12.8" height="8.2" rx="1.8" fill="#fff" fill-opacity="0" stroke="#444" stroke-width="1.8"/>
<circle cx="8" cy="11.8" r="1.1" fill="#444"/><rect x="7.4" y="12" width="1.2" height="3" fill="#444"/>
</svg>
<div class="ct" style="left:293px;top:404.5px;line-height:16px">中島 りえ</div>
<div class="ct" style="left:380px;top:404.5px;line-height:16px">なかしま りえ</div>
<div class="ct" style="left:495px;top:404.5px;line-height:16px;font-size:13.5px">nakajima_rie@example ...</div>
<div class="ct" style="left:685px;top:404.5px;line-height:16px;font-size:13.5px">A</div>
<div class="btn" style="left:166.2px;top:434.5px;width:24.6px;height:25.2px"></div>
<svg class="a" style="left:166.2px;top:434.5px" width="25.0" height="25.0" viewBox="0 0 25 25">
<path d="M17.3 4.3 L20.9 7.6 L9.3 19.3 L5.8 15.8Z" fill="#4db768"/>
<path d="M5.8 15.8 L9.3 19.3 L3.9 21.3Z" fill="#f3cc9c"/>
<path d="M4.7 18.9 L6.3 20.5 L3.9 21.3Z" fill="#444"/>
</svg>
<div class="btn" style="left:212.3px;top:434.5px;width:25.5px;height:25.2px"></div>
<svg class="a" style="left:217.3px;top:437.5px" width="16.0" height="18.0" viewBox="0 0 16 18">
<path d="M4 9 V5.6 A3.6 3.6 0 0 1 11.2 5.6 V6.2" fill="none" stroke="#444" stroke-width="1.8"/><rect x="1.6" y="9" width="12.8" height="8.2" rx="1.8" fill="#fff" fill-opacity="0" stroke="#444" stroke-width="1.8"/>
<circle cx="8" cy="11.8" r="1.1" fill="#444"/><rect x="7.4" y="12" width="1.2" height="3" fill="#444"/>
</svg>
<div class="btn" style="left:255.2px;top:434.5px;width:24.5px;height:25.2px"></div>
<svg class="a" style="left:259.3px;top:437.5px" width="16.0" height="18.0" viewBox="0 0 16 18">
<path d="M4.6 9 V6 A3.4 3.4 0 0 1 11.4 6 V9" fill="none" stroke="#444" stroke-width="1.8"/><rect x="1.6" y="9" width="12.8" height="8.2" rx="1.8" fill="#fff" fill-opacity="0" stroke="#444" stroke-width="1.8"/>
<circle cx="8" cy="11.8" r="1.1" fill="#444"/><rect x="7.4" y="12" width="1.2" height="3" fill="#444"/>
</svg>
<div class="ct" style="left:293px;top:438.5px;line-height:16px">伴 麗奈</div>
<div class="ct" style="left:380px;top:438.5px;line-height:16px">ばん れな</div>
<div class="ct" style="left:495px;top:438.5px;line-height:16px;font-size:13.5px">ban_rena@example.com</div>
<div class="ct" style="left:685px;top:438.5px;line-height:16px;font-size:13.5px">A</div>
<div class="btn" style="left:166.2px;top:468.5px;width:24.6px;height:25.2px"></div>
<svg class="a" style="left:166.2px;top:468.5px" width="25.0" height="25.0" viewBox="0 0 25 25">
<path d="M17.3 4.3 L20.9 7.6 L9.3 19.3 L5.8 15.8Z" fill="#4db768"/>
<path d="M5.8 15.8 L9.3 19.3 L3.9 21.3Z" fill="#f3cc9c"/>
<path d="M4.7 18.9 L6.3 20.5 L3.9 21.3Z" fill="#444"/>
</svg>
<div class="btn" style="left:212.3px;top:468.5px;width:25.5px;height:25.2px"></div>
<svg class="a" style="left:217.3px;top:471.5px" width="16.0" height="18.0" viewBox="0 0 16 18">
<path d="M4 9 V5.6 A3.6 3.6 0 0 1 11.2 5.6 V6.2" fill="none" stroke="#444" stroke-width="1.8"/><rect x="1.6" y="9" width="12.8" height="8.2" rx="1.8" fill="#fff" fill-opacity="0" stroke="#444" stroke-width="1.8"/>
<circle cx="8" cy="11.8" r="1.1" fill="#444"/><rect x="7.4" y="12" width="1.2" height="3" fill="#444"/>
</svg>
<div class="btn" style="left:255.2px;top:468.5px;width:24.5px;height:25.2px"></div>
<svg class="a" style="left:259.3px;top:471.5px" width="16.0" height="18.0" viewBox="0 0 16 18">
<path d="M4.6 9 V6 A3.4 3.4 0 0 1 11.4 6 V9" fill="none" stroke="#444" stroke-width="1.8"/><rect x="1.6" y="9" width="12.8" height="8.2" rx="1.8" fill="#fff" fill-opacity="0" stroke="#444" stroke-width="1.8"/>
<circle cx="8" cy="11.8" r="1.1" fill="#444"/><rect x="7.4" y="12" width="1.2" height="3" fill="#444"/>
</svg>
<div class="ct" style="left:293px;top:472.5px;line-height:16px">大木 竜也</div>
<div class="ct" style="left:380px;top:472.5px;line-height:16px">おおき たつや</div>
<div class="ct" style="left:495px;top:472.5px;line-height:16px;font-size:13.5px">ooki_tatsuya@example ...</div>
<div class="ct" style="left:685px;top:472.5px;line-height:16px;font-size:13.5px">A</div>
<div class="btn" style="left:166.2px;top:502.5px;width:24.6px;height:25.2px"></div>
<svg class="a" style="left:166.2px;top:502.5px" width="25.0" height="25.0" viewBox="0 0 25 25">
<path d="M17.3 4.3 L20.9 7.6 L9.3 19.3 L5.8 15.8Z" fill="#4db768"/>
<path d="M5.8 15.8 L9.3 19.3 L3.9 21.3Z" fill="#f3cc9c"/>
<path d="M4.7 18.9 L6.3 20.5 L3.9 21.3Z" fill="#444"/>
</svg>
<div class="btn" style="left:212.3px;top:502.5px;width:25.5px;height:25.2px"></div>
<svg class="a" style="left:217.3px;top:505.5px" width="16.0" height="18.0" viewBox="0 0 16 18">
<path d="M4 9 V5.6 A3.6 3.6 0 0 1 11.2 5.6 V6.2" fill="none" stroke="#444" stroke-width="1.8"/><rect x="1.6" y="9" width="12.8" height="8.2" rx="1.8" fill="#fff" fill-opacity="0" stroke="#444" stroke-width="1.8"/>
<circle cx="8" cy="11.8" r="1.1" fill="#444"/><rect x="7.4" y="12" width="1.2" height="3" fill="#444"/>
</svg>
<div class="btn" style="left:255.2px;top:502.5px;width:24.5px;height:25.2px"></div>
<svg class="a" style="left:259.3px;top:505.5px" width="16.0" height="18.0" viewBox="0 0 16 18">
<path d="M4.6 9 V6 A3.4 3.4 0 0 1 11.4 6 V9" fill="none" stroke="#444" stroke-width="1.8"/><rect x="1.6" y="9" width="12.8" height="8.2" rx="1.8" fill="#fff" fill-opacity="0" stroke="#444" stroke-width="1.8"/>
<circle cx="8" cy="11.8" r="1.1" fill="#444"/><rect x="7.4" y="12" width="1.2" height="3" fill="#444"/>
</svg>
<div class="ct" style="left:293px;top:506.5px;line-height:16px">工藤 恵梨香</div>
<div class="ct" style="left:380px;top:506.5px;line-height:16px">くどう えりか</div>
<div class="ct" style="left:495px;top:506.5px;line-height:16px;font-size:13.5px">kudou_erika@example. ...</div>
<div class="ct" style="left:685px;top:506.5px;line-height:16px;font-size:13.5px">A</div>
<div class="btn" style="left:166.2px;top:536.5px;width:24.6px;height:25.2px"></div>
<svg class="a" style="left:166.2px;top:536.5px" width="25.0" height="25.0" viewBox="0 0 25 25">
<path d="M17.3 4.3 L20.9 7.6 L9.3 19.3 L5.8 15.8Z" fill="#4db768"/>
<path d="M5.8 15.8 L9.3 19.3 L3.9 21.3Z" fill="#f3cc9c"/>
<path d="M4.7 18.9 L6.3 20.5 L3.9 21.3Z" fill="#444"/>
</svg>
<div class="btn" style="left:212.3px;top:536.5px;width:25.5px;height:25.2px"></div>
<svg class="a" style="left:217.3px;top:539.5px" width="16.0" height="18.0" viewBox="0 0 16 18">
<path d="M4 9 V5.6 A3.6 3.6 0 0 1 11.2 5.6 V6.2" fill="none" stroke="#444" stroke-width="1.8"/><rect x="1.6" y="9" width="12.8" height="8.2" rx="1.8" fill="#fff" fill-opacity="0" stroke="#444" stroke-width="1.8"/>
<circle cx="8" cy="11.8" r="1.1" fill="#444"/><rect x="7.4" y="12" width="1.2" height="3" fill="#444"/>
</svg>
<div class="btn" style="left:255.2px;top:536.5px;width:24.5px;height:25.2px"></div>
<svg class="a" style="left:259.3px;top:539.5px" width="16.0" height="18.0" viewBox="0 0 16 18">
<path d="M4.6 9 V6 A3.4 3.4 0 0 1 11.4 6 V9" fill="none" stroke="#444" stroke-width="1.8"/><rect x="1.6" y="9" width="12.8" height="8.2" rx="1.8" fill="#fff" fill-opacity="0" stroke="#444" stroke-width="1.8"/>
<circle cx="8" cy="11.8" r="1.1" fill="#444"/><rect x="7.4" y="12" width="1.2" height="3" fill="#444"/>
</svg>
<div class="ct" style="left:293px;top:540.5px;line-height:16px">大谷 慶二</div>
<div class="ct" style="left:380px;top:540.5px;line-height:16px">おおたに けいじ</div>
<div class="ct" style="left:495px;top:540.5px;line-height:16px;font-size:13.5px">ootani_keiji@example ...</div>
<div class="ct" style="left:685px;top:540.5px;line-height:16px;font-size:13.5px">A</div>
<div class="btn" style="left:166.2px;top:570.5px;width:24.6px;height:25.2px"></div>
<svg class="a" style="left:166.2px;top:570.5px" width="25.0" height="25.0" viewBox="0 0 25 25">
<path d="M17.3 4.3 L20.9 7.6 L9.3 19.3 L5.8 15.8Z" fill="#4db768"/>
<path d="M5.8 15.8 L9.3 19.3 L3.9 21.3Z" fill="#f3cc9c"/>
<path d="M4.7 18.9 L6.3 20.5 L3.9 21.3Z" fill="#444"/>
</svg>
<div class="btn" style="left:212.3px;top:570.5px;width:25.5px;height:25.2px"></div>
<svg class="a" style="left:217.3px;top:573.5px" width="16.0" height="18.0" viewBox="0 0 16 18">
<path d="M4 9 V5.6 A3.6 3.6 0 0 1 11.2 5.6 V6.2" fill="none" stroke="#444" stroke-width="1.8"/><rect x="1.6" y="9" width="12.8" height="8.2" rx="1.8" fill="#fff" fill-opacity="0" stroke="#444" stroke-width="1.8"/>
<circle cx="8" cy="11.8" r="1.1" fill="#444"/><rect x="7.4" y="12" width="1.2" height="3" fill="#444"/>
</svg>
<div class="btn" style="left:255.2px;top:570.5px;width:24.5px;height:25.2px"></div>
<svg class="a" style="left:259.3px;top:573.5px" width="16.0" height="18.0" viewBox="0 0 16 18">
<path d="M4.6 9 V6 A3.4 3.4 0 0 1 11.4 6 V9" fill="none" stroke="#444" stroke-width="1.8"/><rect x="1.6" y="9" width="12.8" height="8.2" rx="1.8" fill="#fff" fill-opacity="0" stroke="#444" stroke-width="1.8"/>
<circle cx="8" cy="11.8" r="1.1" fill="#444"/><rect x="7.4" y="12" width="1.2" height="3" fill="#444"/>
</svg>
<div class="ct" style="left:293px;top:574.5px;line-height:16px">大内 優</div>
<div class="ct" style="left:380px;top:574.5px;line-height:16px">おおうち ゆう</div>
<div class="ct" style="left:495px;top:574.5px;line-height:16px;font-size:13.5px">oouchi_yuu@example.c ...</div>
<div class="ct" style="left:685px;top:574.5px;line-height:16px;font-size:13.5px">A</div>
<div class="a" style="left:800px;top:152px;width:91px;height:448px;border:8px solid #5e17eb;border-bottom:none"></div>
<div class="a" style="left:800px;top:592.5px;width:91px;height:8px;background:#5e17eb"></div>
<svg class="a" style="left:0;top:0" width="1000" height="600" viewBox="0 0 1000 600">
<line x1="727" y1="230" x2="785" y2="193" stroke="#5e17eb" stroke-width="4"/>
<path d="M801.5 182.5 L773.5 187.5 L786.5 207.5Z" fill="#5e17eb"/>
</svg>
<svg class="a" style="left:0;top:0" width="1000" height="600" viewBox="0 0 1000 600">
<path fill="#0cc0df" d="M288 216.5 H712 A18 18 0 0 1 730.5 234.5 V321 A10 10 0 0 0 740 331.5 A12 12 0 0 1 751.5 343.5 V392.5 A17 17 0 0 1 734.5 409.5 H266 A17 17 0 0 1 249 392.5 V345 A14 14 0 0 1 260 331.5 A10 10 0 0 0 270 321 V234.5 A18 18 0 0 1 288 216.5Z"/>
</svg>
<div class="co" style="left:289px;top:234px;line-height:44px">ヘッダ名</div>
<div class="co" style="left:499px;top:234px;line-height:44px">表示時刻</div>
<div class="co" style="left:286px;top:290px;line-height:44px">または</div>
<div class="co" style="left:457px;top:291px;line-height:44px;letter-spacing:2.4px;-webkit-text-stroke:1.2px #fff">OepnTime</div>
<svg class="a" style="left:0;top:0" width="1000" height="600"><g fill="none" stroke="#fff" stroke-width="4.4" stroke-linecap="round" stroke-linejoin="round">
<path d="M481.0 265.2 V238.39999999999998 H494.3"/><path d="M688.5 246 V272.7 H674.4000000000001"/><path d="M439.0 323.8 V297.0 H452.3"/><path d="M688.5 304 V330.7 H674.4000000000001"/></g></svg>
<div class="co" style="left:268px;top:349px;line-height:44px">の名称のデータ枠を準備</div>
</body></html>
